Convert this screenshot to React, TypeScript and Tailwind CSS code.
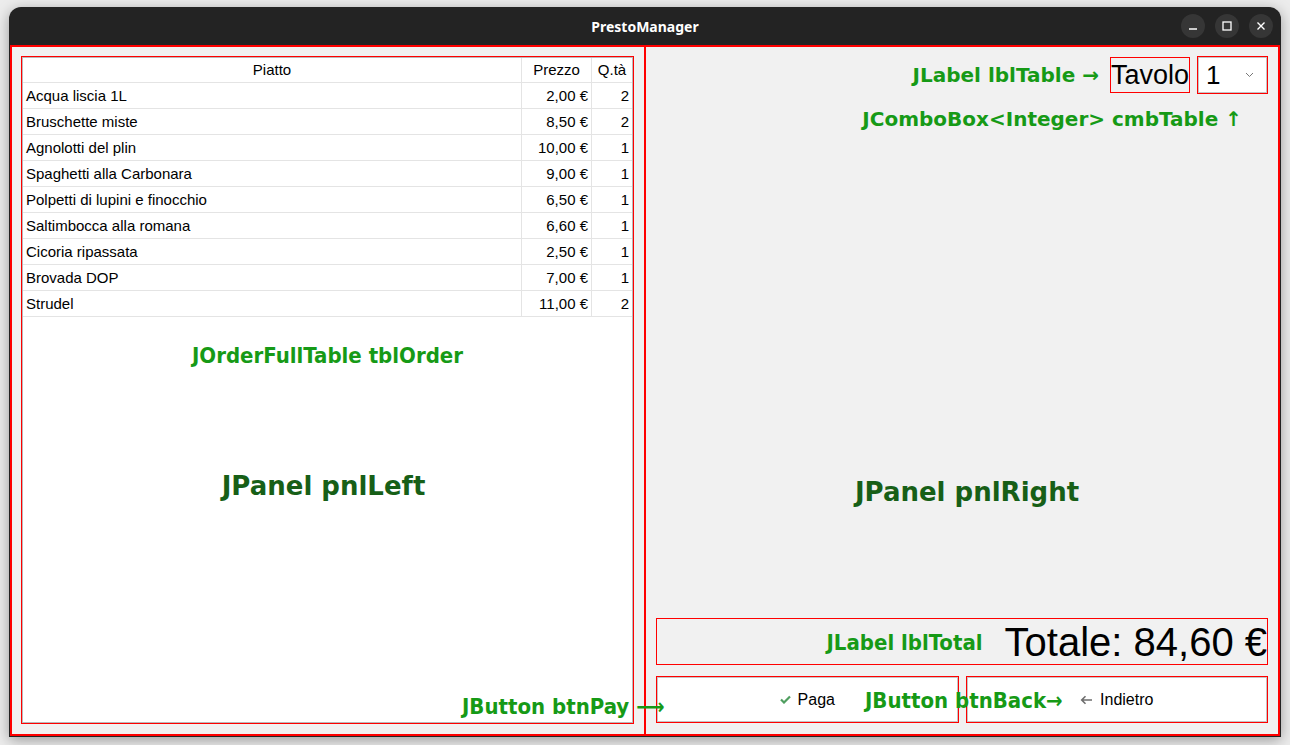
import React from "react";

const rows = [
  { name: "Acqua liscia 1L", price: "2,00 €", qty: 2 },
  { name: "Bruschette miste", price: "8,50 €", qty: 2 },
  { name: "Agnolotti del plin", price: "10,00 €", qty: 1 },
  { name: "Spaghetti alla Carbonara", price: "9,00 €", qty: 1 },
  { name: "Polpetti di lupini e finocchio", price: "6,50 €", qty: 1 },
  { name: "Saltimbocca alla romana", price: "6,60 €", qty: 1 },
  { name: "Cicoria ripassata", price: "2,50 €", qty: 1 },
  { name: "Brovada DOP", price: "7,00 €", qty: 1 },
  { name: "Strudel", price: "11,00 €", qty: 2 },
];

const swing = "font-['Liberation_Sans',Arial,sans-serif]";
const note = "font-['DejaVu_Sans',sans-serif] font-bold text-[#169a16] whitespace-nowrap";
const noteCond =
  "font-['DejaVu_Sans_Condensed','DejaVu_Sans',sans-serif] [font-stretch:condensed] font-bold text-[#169a16] whitespace-nowrap";
const panelNote = "font-['DejaVu_Sans',sans-serif] font-bold text-[26px] leading-[31px] text-[#175f17] whitespace-nowrap";

function WinButton({ children }: { children: React.ReactNode }) {
  return (
    <div className="w-[24px] h-[24px] rounded-full bg-[#363636] flex items-center justify-center">
      {children}
    </div>
  );
}

export default function App() {
  return (
    <div className="w-[1290px] h-[745px] bg-[#ececec] pt-[7px] pl-[9px] overflow-hidden">
      {/* Window */}
      <div className="w-[1272px] h-[730px] bg-[#232323] rounded-t-[12px] overflow-hidden shadow-[0_3px_14px_rgba(0,0,0,0.35)] flex flex-col">
        {/* Title bar */}
        <div className="h-[38px] relative flex items-center justify-center shrink-0">
          <span className="font-['Noto_Sans',sans-serif] font-bold text-[14px] text-white">PrestoManager</span>
          <div className="absolute right-[8px] top-[7px] flex gap-[10px]">
            <WinButton>
              <svg width="10" height="10" viewBox="0 0 10 10">
                <path d="M1 8h8" stroke="#fff" strokeWidth="1.4" />
              </svg>
            </WinButton>
            <WinButton>
              <svg width="10" height="10" viewBox="0 0 10 10">
                <rect x="1" y="1" width="8" height="8" fill="none" stroke="#fff" strokeWidth="1.3" />
              </svg>
            </WinButton>
            <WinButton>
              <svg width="10" height="10" viewBox="0 0 10 10">
                <path d="M1.5 1.5l7 7M8.5 1.5l-7 7" stroke="#fff" strokeWidth="1.4" />
              </svg>
            </WinButton>
          </div>
        </div>

        {/* Content */}
        <div className="relative mx-[1px] h-[691px] border-2 border-[#ff0000] bg-[#f1f1f1] flex">
          {/* pnlLeft */}
          <div className="w-[634px] border-r-2 border-[#ff0000] pl-[9px] pr-[10px] pt-[9px] pb-[10px] flex">
            <div className="flex-1 border border-[#ff0000]">
              <div className={`h-full border border-[#b9b9b9] bg-white text-[15px] text-black ${swing}`}>
                <div className="grid grid-cols-[1fr_70px_41px] h-[25px] border-b border-[#e4e4e4] leading-[24px]">
                  <div className="text-center">Piatto</div>
                  <div className="text-center border-l border-[#e4e4e4]">Prezzo</div>
                  <div className="text-center border-l border-[#e4e4e4]">Q.tà</div>
                </div>
                {rows.map((r) => (
                  <div
                    key={r.name}
                    className="grid grid-cols-[1fr_70px_41px] h-[26px] border-b border-[#e4e4e4] leading-[25px]"
                  >
                    <div className="pl-[3px]">{r.name}</div>
                    <div className="text-right pr-[3px] border-l border-[#e4e4e4]">{r.price}</div>
                    <div className="text-right pr-[3px] border-l border-[#e4e4e4]">{r.qty}</div>
                  </div>
                ))}
                <div className="flex flex-col items-center">
                  <div className={`${noteCond} text-[22px] leading-[26px] mt-[26px]`}>JOrderFullTable tblOrder</div>
                  <div className={`${panelNote} mt-[102px] mr-[8px]`}>JPanel pnlLeft</div>
                </div>
              </div>
            </div>
          </div>

          {/* pnlRight */}
          <div className="flex-1 pl-[10px] pr-[10px] pt-[9px] pb-[11px] flex flex-col">
            <div className="flex justify-end items-center h-[38px]">
              <div className={`${note} text-[20px] mr-[11px]`}>JLabel lblTable →</div>
              <div className={`h-[36px] border border-[#ff0000] flex items-center text-[27px] text-black ${swing}`}>
                Tavolo
              </div>
              <div className="ml-[7px] w-[71px] h-[38px] border border-[#ff0000]">
                <div className={`h-full border border-[#c4c4c4] bg-white flex items-center justify-between pl-[7px] pr-[12px] text-[26px] text-black ${swing}`}>
                  <span>1</span>
                  <svg width="9" height="6" viewBox="0 0 9 6">
                    <path d="M1 1l3.5 3.5L8 1" fill="none" stroke="#777" strokeWidth="1" />
                  </svg>
                </div>
              </div>
            </div>
            <div className={`${note} text-[20px] leading-[24px] mt-[13px] text-right pr-[26px]`}>
              JComboBox&lt;Integer&gt; cmbTable ↑
            </div>
            <div className="flex-1 flex flex-col items-center">
              <div className={`${panelNote} mt-[346px] ml-[10px]`}>JPanel pnlRight</div>
            </div>
            <div className="h-[47px] border border-[#ff0000] flex justify-end items-center">
              <div className={`${noteCond} text-[22px] mr-[22px] mt-[2px]`}>JLabel lblTotal</div>
              <div className={`text-[40px] leading-none text-black ${swing}`}>Totale: 84,60 €</div>
            </div>
            <div className="mt-[11px] grid grid-cols-2 gap-[7px] h-[47px]">
              <div className="border border-[#ff0000]">
                <div className={`h-full border border-[#c4c4c4] bg-white flex items-center justify-center gap-[7px] text-[16px] text-black ${swing}`}>
                  <svg width="11" height="9" viewBox="0 0 11 9">
                    <path d="M1 4.5l3 3L10 1.5" fill="none" stroke="#4f9e5f" strokeWidth="2.2" />
                  </svg>
                  <span>Paga</span>
                </div>
              </div>
              <div className="border border-[#ff0000]">
                <div className={`h-full border border-[#c4c4c4] bg-white flex items-center justify-center gap-[7px] text-[16px] text-black ${swing}`}>
                  <svg width="13" height="10" viewBox="0 0 13 10">
                    <path d="M12 5H2M5.5 1.2L1.7 5l3.8 3.8" fill="none" stroke="#6d6d6d" strokeWidth="1.6" />
                  </svg>
                  <span>Indietro</span>
                </div>
              </div>
            </div>
          </div>

          {/* Annotations over the buttons */}
          <div className={`${noteCond} text-[22px] leading-[26px] absolute left-[450px] top-[647px]`}>
            JButton btnPay ⟶
          </div>
          <div className={`${noteCond} text-[22px] leading-[26px] absolute left-[853px] top-[641px]`}>
            JButton btnBack→
          </div>
        </div>
      </div>
    </div>
  );
}
